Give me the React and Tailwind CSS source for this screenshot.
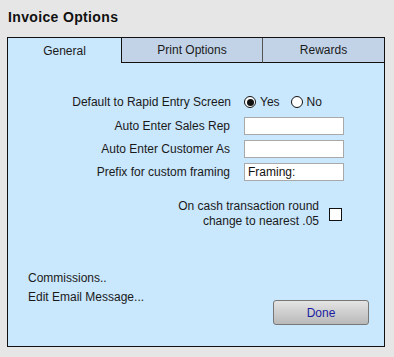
import React, { useState } from 'react';

const FIELDS = [
  { label: 'Auto Enter Sales Rep', value: '' },
  { label: 'Auto Enter Customer As', value: '' },
  { label: 'Prefix for custom framing', value: 'Framing:' },
];

const TABS = [
  { id: 'general', label: 'General', w: 'w-[114px]' },
  { id: 'print', label: 'Print Options', w: 'w-[141px]' },
  { id: 'rewards', label: 'Rewards', w: 'flex-1' },
];

function Radio({ checked, label, onClick }) {
  return (
    <button type="button" onClick={onClick} className="flex items-center gap-[4px] h-[16px]">
      <span className="w-[12px] h-[12px] rounded-full border border-[#111] bg-white flex items-center justify-center">
        {checked && <span className="w-[7px] h-[7px] rounded-full bg-[#111]" />}
      </span>
      <span>{label}</span>
    </button>
  );
}

export default function App() {
  const [tab, setTab] = useState('general');
  const [rapid, setRapid] = useState(true);
  const [round, setRound] = useState(false);

  return (
    <div
      className="w-[394px] h-[357px] bg-[#e6e6e6] text-[#1a1a1a] text-[12px] overflow-hidden"
      style={{ fontFamily: '"Liberation Sans", Arial, sans-serif' }}
    >
      {/* Title */}
      <div className="pt-[9px] pl-[8px] h-[37px] font-bold text-[14px] leading-[17px] tracking-[0.35px] text-[#111]">
        Invoice Options
      </div>

      {/* Panel */}
      <div className="ml-[7px] w-[378px] h-[310px] border border-[#111] bg-[#c9e7fd] flex flex-col">
        {/* Tabs */}
        <div className="flex h-[25px]">
          {TABS.map((t, i) => {
            const active = tab === t.id;
            return (
              <button
                key={t.id}
                type="button"
                onClick={() => setTab(t.id)}
                className={`${t.w} h-[25px] flex items-center justify-center ${
                  i < TABS.length - 1 ? 'border-r' : ''
                } ${active ? 'bg-[#c9e7fd] border-r-[#111]' : 'bg-[#c2d3e8] border-b border-b-[#111] border-r-[#555]'}`}
              >
                {t.label}
              </button>
            );
          })}
        </div>

        {/* Default to Rapid Entry */}
        <div className="mt-[31px] grid grid-cols-[223px_1fr] gap-x-[14px] items-center">
          <div className="text-right leading-[16px]">Default to Rapid Entry Screen</div>
          <div className="flex items-center gap-[11px] -ml-[1px]">
            <Radio checked={rapid} label="Yes" onClick={() => setRapid(true)} />
            <Radio checked={!rapid} label="No" onClick={() => setRapid(false)} />
          </div>
        </div>

        {/* Text fields */}
        <div className="mt-[7px] flex flex-col gap-[5px]">
          {FIELDS.map((f) => (
            <div key={f.label} className="grid grid-cols-[222px_1fr] gap-x-[14px] items-center">
              <div className="text-right">{f.label}</div>
              <input
                defaultValue={f.value}
                className="w-[100px] h-[18px] bg-white border border-[#a9a9a9] pl-[3px] text-[12px] text-[#111] outline-none"
              />
            </div>
          ))}
        </div>

        {/* Rounding checkbox */}
        <div className="mt-[18px] flex justify-end items-center gap-[10px] pr-[42px]">
          <div className="text-right leading-[15px]">
            On cash transaction round
            <br />
            change to nearest .05
          </div>
          <button
            type="button"
            onClick={() => setRound(!round)}
            className="w-[13px] h-[13px] border border-[#111] bg-white flex items-center justify-center text-[10px] leading-none"
          >
            {round ? '✓' : ''}
          </button>
        </div>

        {/* Bottom */}
        <div className="mt-[40px] flex justify-between items-start pl-[20px] pr-[15px]">
          <div className="flex flex-col leading-[19px]">
            <span className="cursor-pointer">Commissions..</span>
            <span className="cursor-pointer">Edit Email Message...</span>
          </div>
          <button
            type="button"
            className="mt-[31px] w-[96px] h-[25px] rounded-[3px] border border-[#777] bg-gradient-to-b from-[#e4e4e4] to-[#b9b9b9] text-[#1c1ca0]"
          >
            Done
          </button>
        </div>
      </div>
    </div>
  );
}
